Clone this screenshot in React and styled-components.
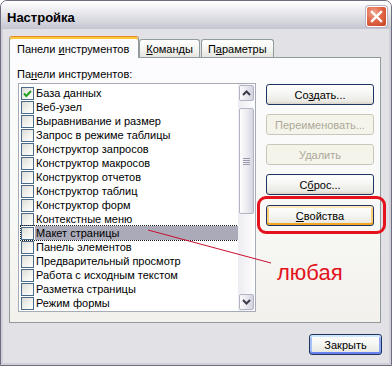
import React from "react";
import styled, { createGlobalStyle, css } from "styled-components";

const Global = createGlobalStyle`
  html, body { margin: 0; padding: 0; background: #ffffff; }
  #root { width: 392px; height: 366px; }
`;

const FONT = `"Liberation Sans", Arial, sans-serif`;

const Window = styled.div`
  position: relative;
  width: 392px;
  height: 366px;
  box-sizing: border-box;
  border: 1px solid #6e6e7e;
  border-radius: 7px 7px 0 0;
  overflow: hidden;
  display: flex;
  flex-direction: column;
  font-family: ${FONT};
  font-size: 11px;
  color: #000;
  background: #e2e1e6;
`;

const TitleBar = styled.div`
  flex: none;
  height: 28px;
  box-sizing: border-box;
  padding: 5px 4px 0 6px;
  display: flex;
  align-items: flex-start;
  justify-content: space-between;
  background: linear-gradient(to bottom, #ffffff 0%, #f4f4f7 22%, #e0e0e7 55%, #c6c6d2 100%);
`;

const Title = styled.div`
  font-size: 13px;
  font-weight: bold;
  line-height: 21px;
  padding-top: 1px;
  color: #000;
`;

const CloseButton = styled.div`
  width: 21px;
  height: 21px;
  box-sizing: border-box;
  border: 1px solid #ffffff;
  border-radius: 3px;
  background: radial-gradient(circle at 35% 30%, #f0a890 0%, #e2694a 45%, #c4401f 100%);
  box-shadow: 0 0 0 1px #b4b4c4;
  display: flex;
  align-items: center;
  justify-content: center;
`;

const Body = styled.div`
  flex: 1;
  display: flex;
  flex-direction: column;
  padding: 7px 9px 0 8px;
  box-shadow: inset 2px 0 0 #cfcfda, inset -2px 0 0 #cfcfda, inset 0 -2px 0 #cfcfda;
`;

const TabRow = styled.div`
  display: flex;
  align-items: flex-end;
  height: 21px;
  gap: 1px;
  position: relative;
  z-index: 1;
`;

const Tab = styled.div`
  box-sizing: border-box;
  border: 1px solid #919b9c;
  border-bottom: none;
  border-radius: 3px 3px 0 0;
  white-space: nowrap;
  display: flex;
  align-items: center;
  line-height: 14px;
  ${(p) =>
    p.$active
      ? css`
          height: 22px;
          margin-bottom: -1px;
          margin-right: -1px;
          padding: 2px 9px 0 7px;
          border-top: 1px solid #e68b2c;
          box-shadow: inset 0 2px 0 #ffc73c;
          background: #fcfcfe;
        `
      : css`
          height: 18px;
          padding: 0 6px;
          background: linear-gradient(to bottom, #ffffff 0%, #f3f3ef 60%, #e6e5df 100%);
        `}
`;

const Panel = styled.div`
  box-sizing: border-box;
  width: 372px;
  height: 266px;
  border: 1px solid #919b9c;
  background: linear-gradient(to bottom, #fcfcfe 0%, #f8f8f6 60%, #f2f1ec 100%);
  padding: 9px 0 0 7px;
  display: flex;
  gap: 10px;
`;

const LeftColumn = styled.div`
  display: flex;
  flex-direction: column;
`;

const FieldLabel = styled.div`
  line-height: 14px;
  height: 14px;
  margin-bottom: 2px;
`;

const ListBox = styled.div`
  box-sizing: border-box;
  width: 238px;
  height: 229px;
  margin-left: 1px;
  border: 1px solid #a5acb5;
  background: #ffffff;
  display: flex;
`;

const Items = styled.div`
  flex: 1;
  padding: 2px 0 0 2px;
  overflow: hidden;
`;

const Row = styled.div`
  height: 14px;
  display: flex;
  align-items: center;
  line-height: 14px;
  white-space: nowrap;
  ${(p) =>
    p.$focused &&
    css`
      outline: 1px dotted #202020;
      outline-offset: 0px;
    `}
`;

const Check = styled.div`
  flex: none;
  width: 13px;
  height: 13px;
  box-sizing: border-box;
  border: 1px solid #4a6a8a;
  background: linear-gradient(135deg, #dcdcd7 0%, #f0f0ec 50%, #ffffff 100%);
  display: flex;
  align-items: center;
  justify-content: center;
`;

const ItemText = styled.span`
  margin-left: 1px;
  padding-left: 1px;
  height: 14px;
  ${(p) =>
    p.$selected &&
    css`
      flex: 1;
      background: #aaaab8;
    `}
`;

const ScrollBar = styled.div`
  flex: none;
  width: 17px;
  box-sizing: border-box;
  padding: 1px;
  display: flex;
  flex-direction: column;
  background: linear-gradient(to right, #ececf1 0%, #f7f7f9 60%, #fdfdfe 100%);
`;

const ScrollButton = styled.div`
  height: 16px;
  box-sizing: border-box;
  border: 1px solid #b4b4c4;
  border-radius: 2px;
  background: linear-gradient(to right, #fbfbfd 0%, #e4e4ec 60%, #d2d2de 100%);
  display: flex;
  align-items: center;
  justify-content: center;
  ${(p) => p.$bottom && css`margin-top: auto;`}
`;

const Thumb = styled.div`
  margin-top: 7px;
  height: 106px;
  box-sizing: border-box;
  border: 1px solid #b4b4c4;
  border-radius: 2px;
  background: linear-gradient(to right, #fdfdfe 0%, #e8e8ee 60%, #d6d6e0 100%);
  display: flex;
  align-items: center;
  justify-content: center;
`;

const Grip = styled.div`
  width: 7px;
  height: 7px;
  background: repeating-linear-gradient(to bottom, #9a9aac 0px, #9a9aac 1px, transparent 1px, transparent 2px);
`;

const ButtonColumn = styled.div`
  display: flex;
  flex-direction: column;
  padding-top: 17px;
  gap: 9px;
`;

const Button = styled.div`
  box-sizing: border-box;
  width: ${(p) => p.$w || 108}px;
  height: 21px;
  border: 1px solid #1d3461;
  border-radius: 3px;
  background: linear-gradient(to bottom, #ffffff 0%, #f6f6f3 45%, #ebeae4 85%, #d8d3c8 100%);
  display: flex;
  align-items: center;
  justify-content: center;
  line-height: 14px;
  color: #000;
  margin-top: ${(p) => p.$mt || 0}px;
  ${(p) =>
    p.$disabled &&
    css`
      border-color: #c9c7ba;
      color: #aca899;
      background: #f5f4ea;
    `}
  ${(p) =>
    p.$hot &&
    css`
      box-shadow: inset 0 2px 0 #ffe9b8, inset 0 -2px 0 #f5a623, inset 2px 0 0 #fbcf72, inset -2px 0 0 #fbcf72;
    `}
  ${(p) =>
    p.$default &&
    css`
      box-shadow: inset 0 2px 0 #cee7ff, inset 0 -2px 0 #6982ee, inset 2px 0 0 #a5c0f5, inset -2px 0 0 #8ea8f0;
    `}
`;

const Footer = styled.div`
  display: flex;
  justify-content: flex-end;
  margin-top: 11px;
`;

const Caption = styled.span`
  white-space: pre;
`;

const Hotkey = styled.span`
  text-decoration: underline;
  text-underline-offset: 1px;
`;

const RedFrame = styled.div`
  position: absolute;
  left: 256px;
  top: 195px;
  width: 129px;
  height: 38px;
  box-sizing: border-box;
  border: 3px solid #e3121c;
  border-radius: 9px;
  pointer-events: none;
`;

const PointerLine = styled.svg`
  position: absolute;
  left: 0;
  top: 0;
  width: 390px;
  height: 364px;
  pointer-events: none;
`;

const Note = styled.div`
  position: absolute;
  left: 276px;
  top: 261px;
  font-size: 22px;
  line-height: 22px;
  color: #e3121c;
  pointer-events: none;
`;

const items = [
  "База данных",
  "Веб-узел",
  "Выравнивание и размер",
  "Запрос в режиме таблицы",
  "Конструктор запросов",
  "Конструктор макросов",
  "Конструктор отчетов",
  "Конструктор таблиц",
  "Конструктор форм",
  "Контекстные меню",
  "Макет страницы",
  "Панель элементов",
  "Предварительный просмотр",
  "Работа с исходным текстом",
  "Разметка страницы",
  "Режим формы",
];

const Chevron = ({ up }) => (
  <svg width="9" height="6" viewBox="0 0 9 6">
    <polyline
      points={up ? "1,5 4.5,1.5 8,5" : "1,1 4.5,4.5 8,1"}
      fill="none"
      stroke="#3c3c4c"
      strokeWidth="2"
    />
  </svg>
);

const CheckMark = () => (
  <svg width="9" height="9" viewBox="0 0 9 9">
    <polyline points="1,4.5 3.3,7 8,2" fill="none" stroke="#21a121" strokeWidth="2" />
  </svg>
);

export default function App() {
  return (
    <>
      <Global />
      <Window>
        <TitleBar>
          <Title>Настройка</Title>
          <CloseButton>
            <svg width="13" height="13" viewBox="0 0 13 13">
              <path d="M2 2 L11 11 M11 2 L2 11" stroke="#ffffff" strokeWidth="2.4" strokeLinecap="square" />
            </svg>
          </CloseButton>
        </TitleBar>
        <Body>
          <TabRow>
            <Tab $active>
              <Caption>
                Панели <Hotkey>и</Hotkey>нструментов
              </Caption>
            </Tab>
            <Tab>
              <Caption>
                <Hotkey>К</Hotkey>оманды
              </Caption>
            </Tab>
            <Tab>
              <Caption>
                П<Hotkey>а</Hotkey>раметры
              </Caption>
            </Tab>
          </TabRow>
          <Panel>
            <LeftColumn>
              <FieldLabel>
                Па<Hotkey>н</Hotkey>ели инструментов:
              </FieldLabel>
              <ListBox>
                <Items>
                  {items.map((t, i) => (
                    <Row key={t} $focused={i === 10}>
                      <Check>{i === 0 && <CheckMark />}</Check>
                      <ItemText $selected={i === 10}>{t}</ItemText>
                    </Row>
                  ))}
                </Items>
                <ScrollBar>
                  <ScrollButton>
                    <Chevron up />
                  </ScrollButton>
                  <Thumb>
                    <Grip />
                  </Thumb>
                  <ScrollButton $bottom>
                    <Chevron />
                  </ScrollButton>
                </ScrollBar>
              </ListBox>
            </LeftColumn>
            <ButtonColumn>
              <Button>
                <Caption>
                  Со<Hotkey>з</Hotkey>дать...
                </Caption>
              </Button>
              <Button $disabled>Переименовать...</Button>
              <Button $disabled>Удалить</Button>
              <Button>
                <Caption>
                  С<Hotkey>б</Hotkey>рос...
                </Caption>
              </Button>
              <Button $hot $mt={1}>
                <Caption>
                  <Hotkey>С</Hotkey>войства
                </Caption>
              </Button>
            </ButtonColumn>
          </Panel>
          <Footer>
            <Button $w={73} $default>
              Закрыть
            </Button>
          </Footer>
        </Body>
        <RedFrame />
        <PointerLine viewBox="0 0 390 364">
          <line x1="147" y1="229" x2="270" y2="262" stroke="#c8102e" strokeWidth="1" />
        </PointerLine>
        <Note>любая</Note>
      </Window>
    </>
  );
}
